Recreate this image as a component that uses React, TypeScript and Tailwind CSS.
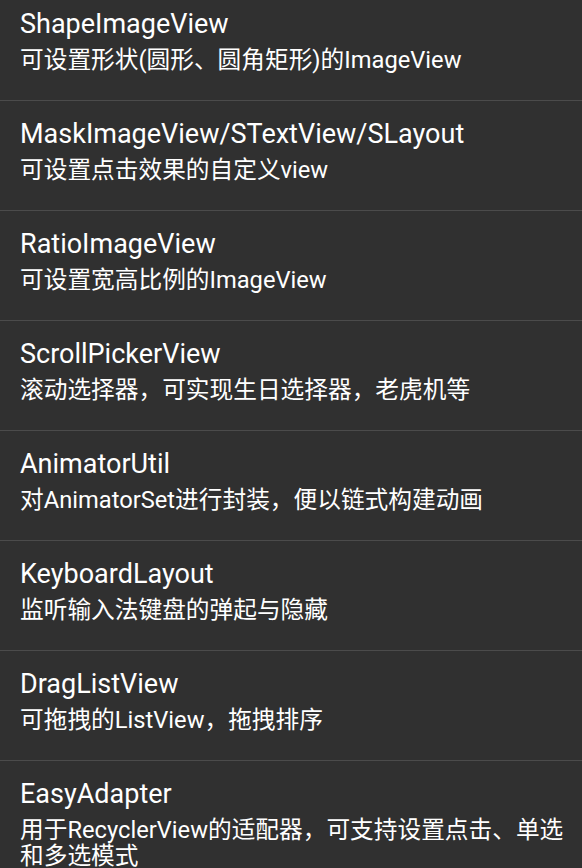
const ITEMS = [
  { title: "ShapeImageView", desc: "可设置形状(圆形、圆角矩形)的ImageView" },
  { title: "MaskImageView/STextView/SLayout", desc: "可设置点击效果的自定义view" },
  { title: "RatioImageView", desc: "可设置宽高比例的ImageView" },
  { title: "ScrollPickerView", desc: "滚动选择器，可实现生日选择器，老虎机等" },
  { title: "AnimatorUtil", desc: "对AnimatorSet进行封装，便以链式构建动画" },
  { title: "KeyboardLayout", desc: "监听输入法键盘的弹起与隐藏" },
  { title: "DragListView", desc: "可拖拽的ListView，拖拽排序" },
  { title: "EasyAdapter", desc: "用于RecyclerView的适配器，可支持设置点击、单选和多选模式" },
];

export default function App() {
  return (
    <div className="h-[868px] w-[582px] overflow-hidden bg-[#303030] font-['Roboto','Noto_Sans_CJK_SC',sans-serif] text-white">
      {/* list is scrolled a little, first row is cut at the top */}
      <div className="-mt-[9px] flex flex-col">
        {ITEMS.map((it) => (
          <div key={it.title} className="border-b border-[#4b4b4b] pb-[27px] pl-5 pr-3 pt-[18px]">
            <p className="text-[27px] leading-[30px]">{it.title}</p>
            <p className="mt-[8px] text-[23.7px] leading-[26px]">{it.desc}</p>
          </div>
        ))}
      </div>
    </div>
  );
}
